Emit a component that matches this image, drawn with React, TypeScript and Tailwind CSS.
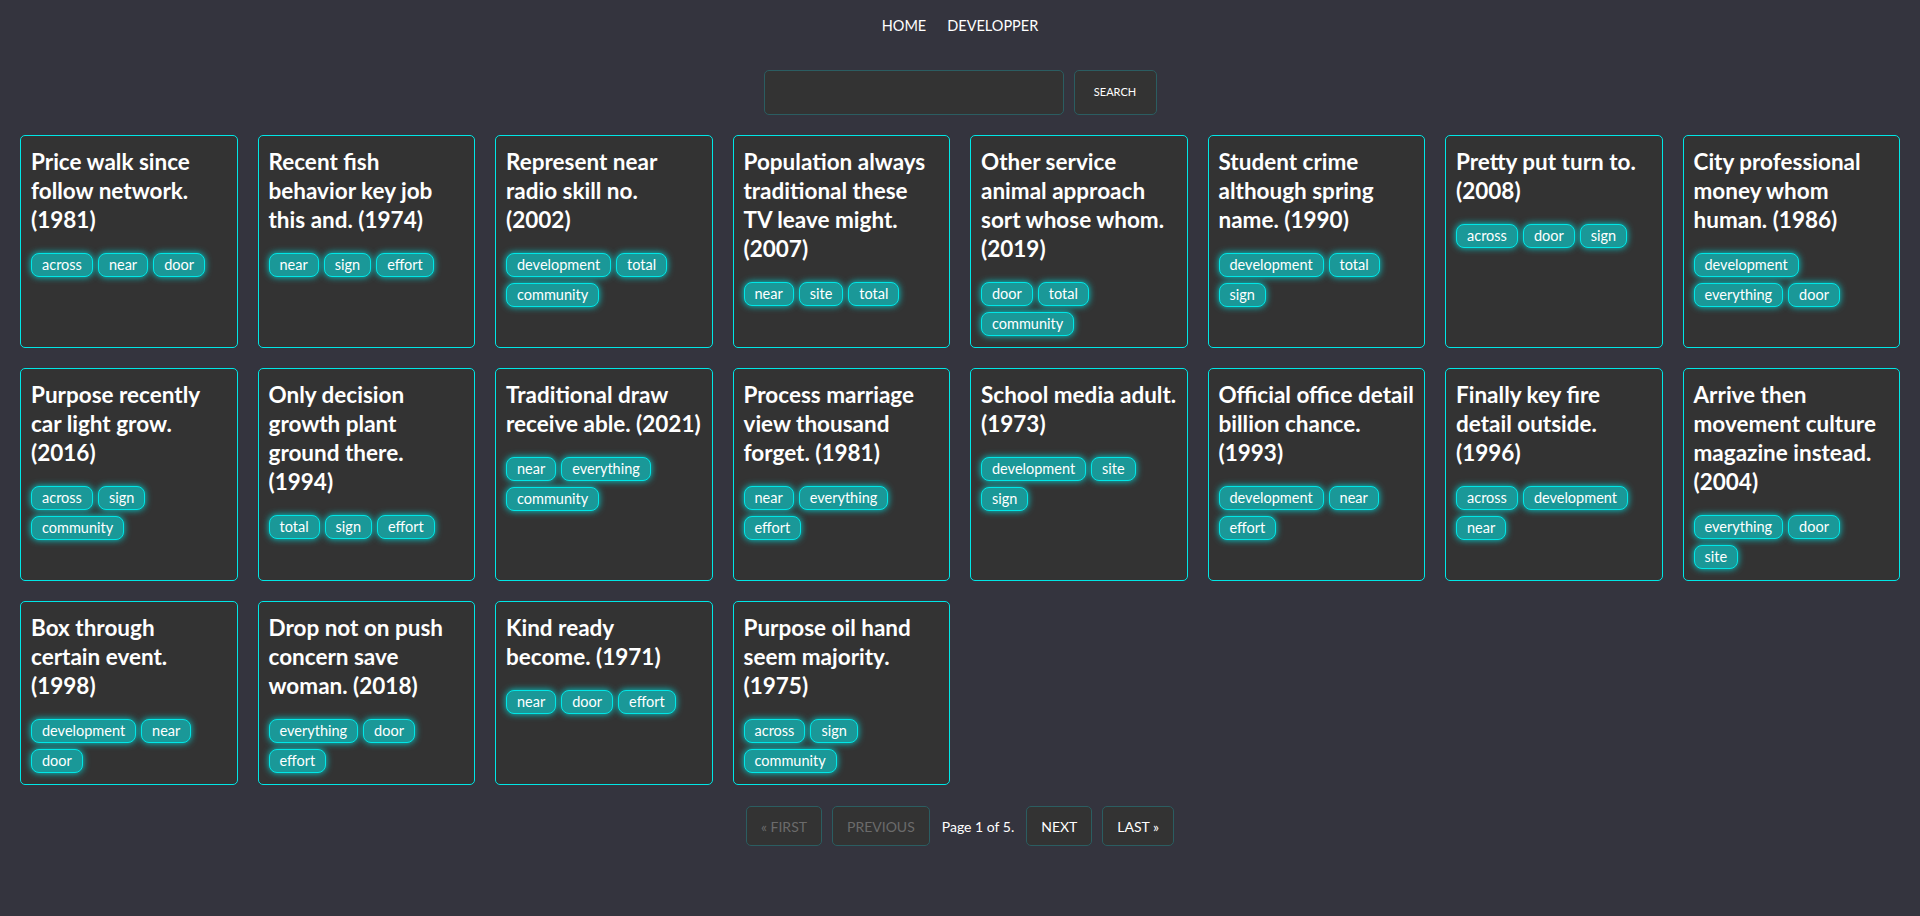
import React from "react";

// sample data for page 1
const BOOKS = [
  { title: "Price walk since follow network.", year: 1981, tags: ["across", "near", "door"] },
  { title: "Recent fish behavior key job this and.", year: 1974, tags: ["near", "sign", "effort"] },
  { title: "Represent near radio skill no.", year: 2002, tags: ["development", "total", "community"] },
  { title: "Population always traditional these TV leave might.", year: 2007, tags: ["near", "site", "total"] },
  { title: "Other service animal approach sort whose whom.", year: 2019, tags: ["door", "total", "community"] },
  { title: "Student crime although spring name.", year: 1990, tags: ["development", "total", "sign"] },
  { title: "Pretty put turn to.", year: 2008, tags: ["across", "door", "sign"] },
  { title: "City professional money whom human.", year: 1986, tags: ["development", "everything", "door"] },
  { title: "Purpose recently car light grow.", year: 2016, tags: ["across", "sign", "community"] },
  { title: "Only decision growth plant ground there.", year: 1994, tags: ["total", "sign", "effort"] },
  { title: "Traditional draw receive able.", year: 2021, tags: ["near", "everything", "community"] },
  { title: "Process marriage view thousand forget.", year: 1981, tags: ["near", "everything", "effort"] },
  { title: "School media adult.", year: 1973, tags: ["development", "site", "sign"] },
  { title: "Official office detail billion chance.", year: 1993, tags: ["development", "near", "effort"] },
  { title: "Finally key fire detail outside.", year: 1996, tags: ["across", "development", "near"] },
  { title: "Arrive then movement culture magazine instead.", year: 2004, tags: ["everything", "door", "site"] },
  { title: "Box through certain event.", year: 1998, tags: ["development", "near", "door"] },
  { title: "Drop not on push concern save woman.", year: 2018, tags: ["everything", "door", "effort"] },
  { title: "Kind ready become.", year: 1971, tags: ["near", "door", "effort"] },
  { title: "Purpose oil hand seem majority.", year: 1975, tags: ["across", "sign", "community"] },
];

function Tag({ label }: { label: string }) {
  return (
    <span className="flex h-[24px] items-center rounded-[8px] border border-[#00e6e6] bg-[#1a9898] px-[10px] text-[14.5px] leading-[18px] text-white shadow-[0_0_7px_#00d5d5]">
      {label}
    </span>
  );
}

function BookCard({ title, year, tags }: { title: string; year: number; tags: string[] }) {
  return (
    <div className="rounded-[5px] border border-[#00e6e6] bg-[#333333] px-[10px] pt-[11px] pb-[11px]">
      <h2 className="mb-[19px] text-[22.5px] font-bold leading-[29px] text-white">
        {title} ({year})
      </h2>
      <div className="flex flex-wrap gap-x-[5px] gap-y-[6px]">
        {tags.map((t) => (
          <Tag key={t} label={t} />
        ))}
      </div>
    </div>
  );
}

function PageButton({ label, disabled }: { label: string; disabled?: boolean }) {
  return (
    <button
      className={`h-[40px] rounded-[5px] border border-[#2b5d61] bg-[#333333] px-[14px] text-[14px] ${
        disabled ? "text-[#6b6b6b]" : "text-white"
      }`}
    >
      {label}
    </button>
  );
}

export default function App() {
  return (
    <div className="min-h-screen bg-[#34343e] font-['Lato',sans-serif] text-white">
      {/* nav */}
      <nav className="flex justify-center gap-[21px] pt-[16px] text-[14.5px] leading-[20px]">
        <a>HOME</a>
        <a>DEVELOPPER</a>
      </nav>

      {/* search */}
      <div className="mt-[34px] flex justify-center gap-[10px]">
        <input className="h-[45px] w-[300px] rounded-[5px] border border-[#2b5d61] bg-[#333333] px-3 text-white outline-none" />
        <button className="h-[45px] w-[83px] rounded-[5px] border border-[#2b5d61] bg-[#333333] text-[11px]">
          SEARCH
        </button>
      </div>

      {/* cards */}
      <div className="mt-[20px] grid grid-cols-8 gap-[20px] px-[20px]">
        {BOOKS.map((b) => (
          <BookCard key={b.title} {...b} />
        ))}
      </div>

      {/* pagination */}
      <div className="mt-[21px] flex items-center justify-center gap-[10px]">
        <PageButton label="« FIRST" disabled />
        <PageButton label="PREVIOUS" disabled />
        <span className="px-[2px] text-[14px]">Page 1 of 5.</span>
        <PageButton label="NEXT" />
        <PageButton label="LAST »" />
      </div>
    </div>
  );
}
